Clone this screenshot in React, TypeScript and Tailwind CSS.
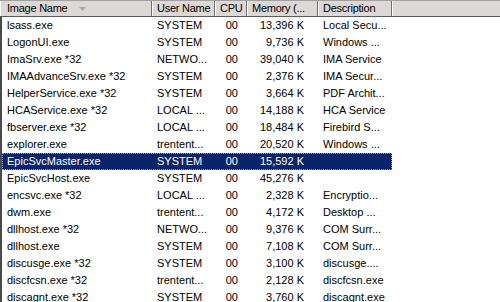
import React from "react";

type Row = [string, string, string, string, string];

const rows: Row[] = [
  ["lsass.exe", "SYSTEM", "00", "13,396 K", "Local Secu..."],
  ["LogonUI.exe", "SYSTEM", "00", "9,736 K", "Windows ..."],
  ["ImaSrv.exe *32", "NETWO...", "00", "39,040 K", "IMA Service"],
  ["IMAAdvanceSrv.exe *32", "SYSTEM", "00", "2,376 K", "IMA Secur..."],
  ["HelperService.exe *32", "SYSTEM", "00", "3,664 K", "PDF Archit..."],
  ["HCAService.exe *32", "LOCAL ...", "00", "14,188 K", "HCA Service"],
  ["fbserver.exe *32", "LOCAL ...", "00", "18,484 K", "Firebird S..."],
  ["explorer.exe", "trentent...", "00", "20,520 K", "Windows ..."],
  ["EpicSvcMaster.exe", "SYSTEM", "00", "15,592 K", ""],
  ["EpicSvcHost.exe", "SYSTEM", "00", "45,276 K", ""],
  ["encsvc.exe *32", "LOCAL ...", "00", "2,328 K", "Encryptio..."],
  ["dwm.exe", "trentent...", "00", "4,172 K", "Desktop ..."],
  ["dllhost.exe *32", "NETWO...", "00", "9,376 K", "COM Surr..."],
  ["dllhost.exe", "SYSTEM", "00", "7,108 K", "COM Surr..."],
  ["discusge.exe *32", "SYSTEM", "00", "3,100 K", "discusge...."],
  ["discfcsn.exe *32", "trentent...", "00", "2,128 K", "discfcsn.exe"],
  ["discagnt.exe *32", "SYSTEM", "00", "3,760 K", "discagnt.exe"],
];

function HeaderCell({ w, children }: { w: string; children?: React.ReactNode }) {
  return (
    <div
      className={`${w} h-full flex items-center pl-[5px] tracking-[-0.25px] border-r border-r-[#6f6f6f] shadow-[inset_1px_0_0_#ffffff] shrink-0 overflow-hidden whitespace-nowrap`}
    >
      {children}
    </div>
  );
}

export default function App() {
  return (
    <div
      className="w-[500px] h-[302px] overflow-hidden bg-white text-black text-[11px] leading-[17px]"
      style={{ fontFamily: '"Liberation Sans", Arial, sans-serif' }}
    >
      <div className="flex h-[17px] bg-[#dbd8d5] border-t border-t-[#a0a0a0] border-b border-b-[#5a5a5a]">
        <HeaderCell w="w-[152px]">
          <span className="pl-[2px]">Image Name</span>
          <svg width="7" height="4" viewBox="0 0 7 4" className="ml-[12px] mt-[1px]">
            <polygon points="0,0 7,0 3.5,4" fill="#a8a8a8" />
          </svg>
        </HeaderCell>
        <HeaderCell w="w-[63px]">User Name</HeaderCell>
        <HeaderCell w="w-[32px]">CPU</HeaderCell>
        <HeaderCell w="w-[71px]">Memory (...</HeaderCell>
        <HeaderCell w="w-[74px]">Description</HeaderCell>
        <div className="flex-1 h-full shadow-[inset_1px_0_0_#ffffff]" />
      </div>
      <div className="border-l-2 border-l-[#4a4a4a]">
        {rows.map((r, i) => {
          const sel = i === 8;
          return (
            <div key={i} className="flex h-[17px]">
              <div
                className={`flex w-[390px] shrink-0 ${
                  sel
                    ? "bg-[#0a246a] text-white outline-1 outline-dotted outline-[#8aa0d8] -outline-offset-1"
                    : ""
                }`}
              >
                <div className="w-[150px] shrink-0 pl-[5px] whitespace-nowrap overflow-hidden">{r[0]}</div>
                <div className="w-[63px] shrink-0 pl-[5px] whitespace-nowrap overflow-hidden">{r[1]}</div>
                <div className="w-[32px] shrink-0 pr-[9px] text-right whitespace-nowrap">{r[2]}</div>
                <div className="w-[71px] shrink-0 pr-[14px] text-right whitespace-nowrap">{r[3]}</div>
                <div className="w-[74px] shrink-0 pl-[5px] whitespace-nowrap overflow-hidden">{r[4]}</div>
              </div>
            </div>
          );
        })}
      </div>
    </div>
  );
}
